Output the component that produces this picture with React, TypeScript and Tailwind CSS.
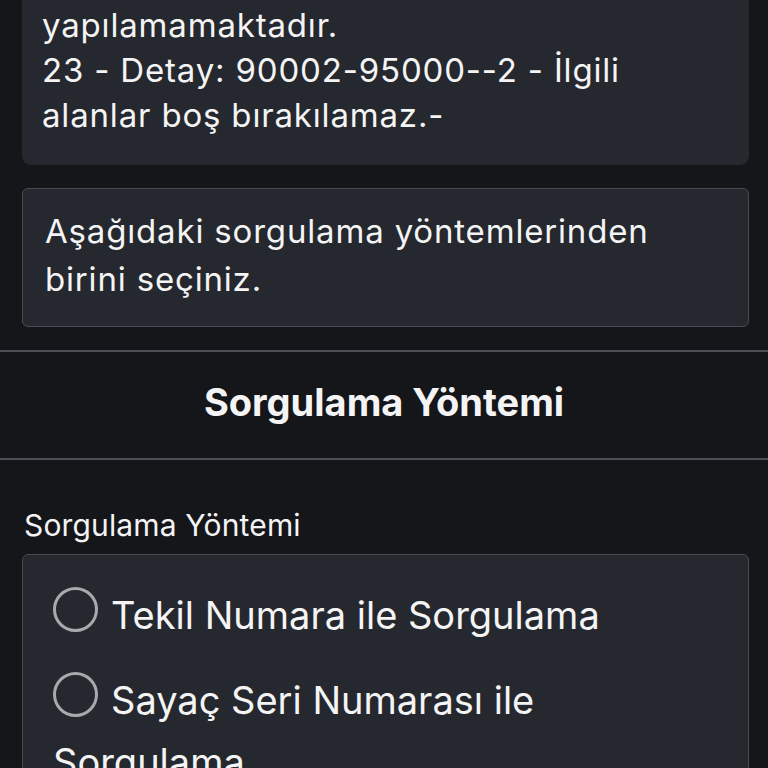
import { useState } from "react";

type Method = "tekil" | "sayac";

const methods: { value: Method; label: string }[] = [
  { value: "tekil", label: "Tekil Numara ile Sorgulama" },
  { value: "sayac", label: "Sayaç Seri Numarası ile Sorgulama" },
];

export default function App() {
  const [method, setMethod] = useState<Method | null>(null);

  return (
    <div
      className="min-h-screen bg-[#15161a] text-[#f4f4f5]"
      style={{ fontFamily: "Inter, 'Open Sans', sans-serif" }}
    >
      <div className="pl-[22px] pr-[19px]">
        {/* error message, top is scrolled off */}
        <div className="rounded-b-[9px] bg-[#25282e] pl-[20px] pr-[20px] pt-[3px] pb-[27px] text-[33px] leading-[45px] tracking-[0.025em]">
          yapılamamaktadır.
          <br />
          23 - Detay: 90002-95000--2 - İlgili alanlar boş bırakılamaz.-
        </div>

        <div className="mt-[23px] rounded-[6px] border border-[#474a50] bg-[#25282e] pl-[22px] pr-[20px] pt-[18px] pb-[23px] text-[33px] leading-[48px] tracking-[0.025em]">
          Aşağıdaki sorgulama yöntemlerinden birini seçiniz.
        </div>
      </div>

      <div className="mt-[23px] border-y-2 border-[#4c4f55] pt-[26px] pb-[32px] text-center text-[38px] font-bold leading-[48px]">
        Sorgulama Yöntemi
      </div>

      <div className="pl-[22px] pr-[19px] pt-[47px]">
        <label className="block pl-[2px] text-[30px] leading-[36px] tracking-[0.005em]">
          Sorgulama Yöntemi
        </label>

        <div className="mt-[11px] rounded-[6px] border border-[#474a50] bg-[#25282e] pl-[30px] pr-[60px] pt-[29px] pb-[24px]">
          {methods.map((m) => (
            <div
              key={m.value}
              onClick={() => setMethod(m.value)}
              className="mb-[23px] cursor-pointer text-[38px] leading-[62px]"
            >
              <span
                className={
                  "mr-[13px] mt-[3px] inline-block size-[45px] rounded-full border-[3px] align-top " +
                  (method === m.value ? "border-[#4f8cf7]" : "border-[#a7a9ad]")
                }
              />
              {m.label}
            </div>
          ))}
        </div>
      </div>
    </div>
  );
}
